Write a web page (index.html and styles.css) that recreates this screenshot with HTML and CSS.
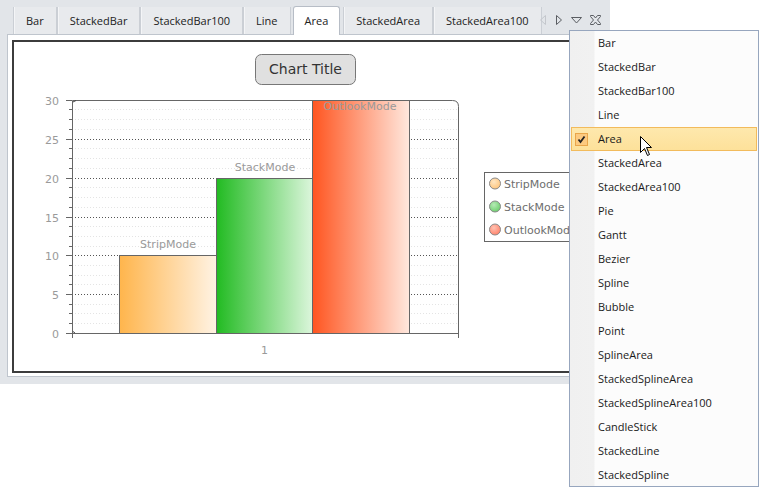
FILE: index.html
```
<!DOCTYPE html>
<html>
<head>
<meta charset="utf-8">
<link rel="stylesheet" href="styles.css">
</head>
<body>
<div class="tabctl">
  <div class="strip">
    <div class="tab">Bar</div>
    <div class="tab">StackedBar</div>
    <div class="tab">StackedBar100</div>
    <div class="tab">Line</div>
    <div class="tab sel">Area</div>
    <div class="tab">StackedArea</div>
    <div class="tab">StackedArea100</div>
    <div class="nav">
      <svg class="ic" width="8" height="10" viewBox="0 0 8 10"><path d="M6.5 0.5 L1.5 5 L6.5 9.5 Z" fill="none" stroke="#c4c7cc"/></svg>
      <svg class="ic" width="8" height="10" viewBox="0 0 8 10"><path d="M1.5 0.5 L6.5 5 L1.5 9.5 Z" fill="none" stroke="#5a5d62"/></svg>
      <svg class="ic" width="11" height="7" viewBox="0 0 11 7"><path d="M0.5 0.5 L10.5 0.5 L5.5 6 Z" fill="none" stroke="#5a5d62"/></svg>
      <svg class="ic" width="11" height="10" viewBox="0 0 11 10"><path d="M0.5 0.5 H3.5 L5.5 3 L7.5 0.5 H10.5 V1.5 L7.5 5 L10.5 8.5 V9.5 H7.5 L5.5 7 L3.5 9.5 H0.5 V8.5 L3.5 5 L0.5 1.5 Z" fill="none" stroke="#5a5d62"/></svg>
    </div>
  </div>
  <div class="panel">
    <div class="chart">
      <svg class="plot" width="582" height="329" viewBox="14 42 582 329">
        <defs>
          <linearGradient id="gO" x1="0" x2="1" y1="0" y2="0"><stop offset="0" stop-color="#ffb54c"/><stop offset="1" stop-color="#fff3e4"/></linearGradient>
          <linearGradient id="gG" x1="0" x2="1" y1="0" y2="0"><stop offset="0" stop-color="#22bb22"/><stop offset="1" stop-color="#dcf6dc"/></linearGradient>
          <linearGradient id="gR" x1="0" x2="1" y1="0" y2="0"><stop offset="0" stop-color="#ff5520"/><stop offset="1" stop-color="#ffe8de"/></linearGradient>
          <radialGradient id="cO" cx="0.4" cy="0.35" r="0.7"><stop offset="0" stop-color="#ffe6c2"/><stop offset="1" stop-color="#ffc47a"/></radialGradient>
          <radialGradient id="cG" cx="0.4" cy="0.35" r="0.7"><stop offset="0" stop-color="#b6eab6"/><stop offset="1" stop-color="#6acd6a"/></radialGradient>
          <radialGradient id="cR" cx="0.4" cy="0.35" r="0.7"><stop offset="0" stop-color="#ffc2b2"/><stop offset="1" stop-color="#ff8068"/></radialGradient>
        </defs>
        <rect x="255.5" y="54.5" width="100" height="30" rx="6" fill="#e0e0e0" stroke="#777"/>
        <text class="title" x="305.5" y="73.5" text-anchor="middle">Chart Title</text>

        <g class="minor">
          <path d="M72 109.5H458M72 119.5H458M72 129.5H458M72 148.5H458M72 158.5H458M72 168.5H458M72 187.5H458M72 197.5H458M72 207.5H458M72 226.5H458M72 236.5H458M72 246.5H458M72 265.5H458M72 275.5H458M72 284.5H458M72 304.5H458M72 313.5H458M72 323.5H458"/>
        </g>
        <g class="major">
          <path d="M72 139.5H458M72 178.5H458M72 217.5H458M72 255.5H458M72 294.5H458"/>
        </g>

        <rect x="119.5" y="255.5" width="97" height="78" fill="url(#gO)" stroke="#666"/>
        <rect x="216.5" y="178.5" width="96" height="155" fill="url(#gG)" stroke="#666"/>
        <rect x="312.5" y="100.5" width="97" height="233" fill="url(#gR)" stroke="#666"/>

        <path d="M72.5 338 V100.5 H452.5 Q458.5 100.5 458.5 106.5 V338 M66 333.5 H458.5" fill="none" stroke="#666"/>
        <path class="ticks" d="M66 100.5H72M66 139.5H72M66 178.5H72M66 217.5H72M66 255.5H72M66 294.5H72M69 109.5H72M69 119.5H72M69 129.5H72M69 148.5H72M69 158.5H72M69 168.5H72M69 187.5H72M69 197.5H72M69 207.5H72M69 226.5H72M69 236.5H72M69 246.5H72M69 265.5H72M69 275.5H72M69 284.5H72M69 304.5H72M69 313.5H72M69 323.5H72" stroke="#666"/>
        <path d="M73 102 L76 100.5 M73 331.5 L75 333" stroke="#444"/>

        <g class="axis">
          <text x="59" y="104.5" text-anchor="end">30</text>
          <text x="59" y="143.5" text-anchor="end">25</text>
          <text x="59" y="182.5" text-anchor="end">20</text>
          <text x="59" y="221.5" text-anchor="end">15</text>
          <text x="59" y="259.5" text-anchor="end">10</text>
          <text x="59" y="298.5" text-anchor="end">5</text>
          <text x="59" y="337.5" text-anchor="end">0</text>
          <text x="264.5" y="354" text-anchor="middle">1</text>
          <text x="168" y="248" text-anchor="middle">StripMode</text>
          <text x="265" y="171" text-anchor="middle">StackMode</text>
          <text x="360" y="110" text-anchor="middle">OutlookMode</text>
        </g>

        <rect x="484.5" y="172.5" width="130" height="69" fill="#fff" stroke="#666"/>
        <circle cx="495" cy="183.5" r="5.5" fill="url(#cO)" stroke="#8a8a8a"/>
        <circle cx="495" cy="206.5" r="5.5" fill="url(#cG)" stroke="#8a8a8a"/>
        <circle cx="495" cy="229.5" r="5.5" fill="url(#cR)" stroke="#8a8a8a"/>
        <g class="legend">
          <text x="504" y="187.5">StripMode</text>
          <text x="504" y="210.5">StackMode</text>
          <text x="504" y="233.5">OutlookMode</text>
        </g>
      </svg>
    </div>
  </div>
</div>

<div class="menu">
  <div class="item"><span class="ico"></span>Bar</div>
  <div class="item"><span class="ico"></span>StackedBar</div>
  <div class="item"><span class="ico"></span>StackedBar100</div>
  <div class="item"><span class="ico"></span>Line</div>
  <div class="item hi"><span class="ico"><span class="chk"><svg width="11" height="11" viewBox="0 0 11 11"><path d="M2.5 5.5 L4.5 8 L8.5 2.5" fill="none" stroke="#222" stroke-width="1.8"/></svg></span></span>Area</div>
  <div class="item"><span class="ico"></span>StackedArea</div>
  <div class="item"><span class="ico"></span>StackedArea100</div>
  <div class="item"><span class="ico"></span>Pie</div>
  <div class="item"><span class="ico"></span>Gantt</div>
  <div class="item"><span class="ico"></span>Bezier</div>
  <div class="item"><span class="ico"></span>Spline</div>
  <div class="item"><span class="ico"></span>Bubble</div>
  <div class="item"><span class="ico"></span>Point</div>
  <div class="item"><span class="ico"></span>SplineArea</div>
  <div class="item"><span class="ico"></span>StackedSplineArea</div>
  <div class="item"><span class="ico"></span>StackedSplineArea100</div>
  <div class="item"><span class="ico"></span>CandleStick</div>
  <div class="item"><span class="ico"></span>StackedLine</div>
  <div class="item"><span class="ico"></span>StackedSpline</div>
</div>

<svg class="cursor" width="13" height="21" viewBox="0 0 13 21"><path d="M0.5 0.5 V16.5 L4.5 12.5 L7.5 19.5 L9.5 18.5 L6.5 11.5 H11.5 Z" fill="#fff" stroke="#000"/></svg>
</body>
</html>
```
FILE: styles.css
```
html, body {
  margin: 0;
  padding: 0;
  background: #fff;
}
body {
  width: 759px;
  height: 487px;
  overflow: hidden;
  position: relative;
  font-family: "Open Sans", "Noto Sans", sans-serif;
}
.tabctl {
  width: 610px;
  height: 384px;
  background: #e2e5e9;
  display: flex;
  flex-direction: column;
}
.strip {
  height: 34px;
  display: flex;
  align-items: flex-end;
  padding-left: 13px;
  box-sizing: border-box;
  position: relative;
  z-index: 2;
}
.tab {
  height: 27px;
  box-sizing: border-box;
  padding: 0 12px 1px;
  display: flex;
  align-items: center;
  font-size: 11px;
  color: #222;
  background: #e8eaed;
  border-left: 1px solid #cbcfd5;
  border-right: 1px solid #cbcfd5;
  box-shadow: inset 1px 0 #f4f5f7;
}
.tab.sel {
  height: 29px;
  margin: 0 3px -1px 2px;
  background: #fff;
  border: 1px solid #b7bdc6;
  border-bottom: none;
  border-radius: 3px 3px 0 0;
  box-shadow: none;
  padding: 0 11px 2px;
}
.nav {
  display: flex;
  align-items: center;
  gap: 8px;
  height: 27px;
  margin-left: -3px;
  padding-bottom: 1px;
  box-sizing: border-box;
}
.panel {
  margin: 0 7px;
  height: 343px;
  box-sizing: border-box;
  background: #fff;
  border: 1px solid #bfc5cd;
  padding: 5px 4px 3px 4px;
}
.chart {
  height: 333px;
  box-sizing: border-box;
  border: 2px solid #3c3c3c;
  overflow: hidden;
}
.plot {
  display: block;
  font-family: "DejaVu Sans", sans-serif;
}
.title {
  font-size: 14px;
  fill: #333;
}
.minor path {
  stroke: #e4e4e4;
  stroke-dasharray: 1 2;
}
.major path {
  stroke: #555;
  stroke-dasharray: 1 2;
}
.axis text {
  font-size: 11px;
  fill: #9a9a9a;
}
.legend text {
  font-size: 11px;
  fill: #6e6e6e;
}
.menu {
  position: absolute;
  left: 569px;
  top: 30px;
  width: 190px;
  height: 457px;
  box-sizing: border-box;
  border: 1px solid #97a6be;
  background: linear-gradient(to right, #f0f0f0 0, #f1f1f1 24px, #fcfcfc 25px);
  overflow: hidden;
  z-index: 5;
}
.item {
  height: 24px;
  box-sizing: border-box;
  display: flex;
  align-items: center;
  font-size: 11px;
  color: #1a1a1a;
  padding-bottom: 2px;
}
.ico {
  width: 28px;
  flex: none;
  display: flex;
  align-items: center;
}
.item.hi {
  margin: 0 1px;
  border: 1px solid #f2bb5c;
  background: linear-gradient(#fee8ad, #fde19a);
}
.item.hi .ico {
  width: 26px;
  margin-top: 2px;
}
.chk {
  margin-left: 3px;
  width: 13px;
  height: 13px;
  box-sizing: border-box;
  border: 1px solid #e9a64a;
  background: #fcca80;
  display: flex;
  align-items: center;
  justify-content: center;
}
.chk svg {
  display: block;
}
.cursor {
  position: absolute;
  left: 640px;
  top: 136px;
  z-index: 6;
}
```
